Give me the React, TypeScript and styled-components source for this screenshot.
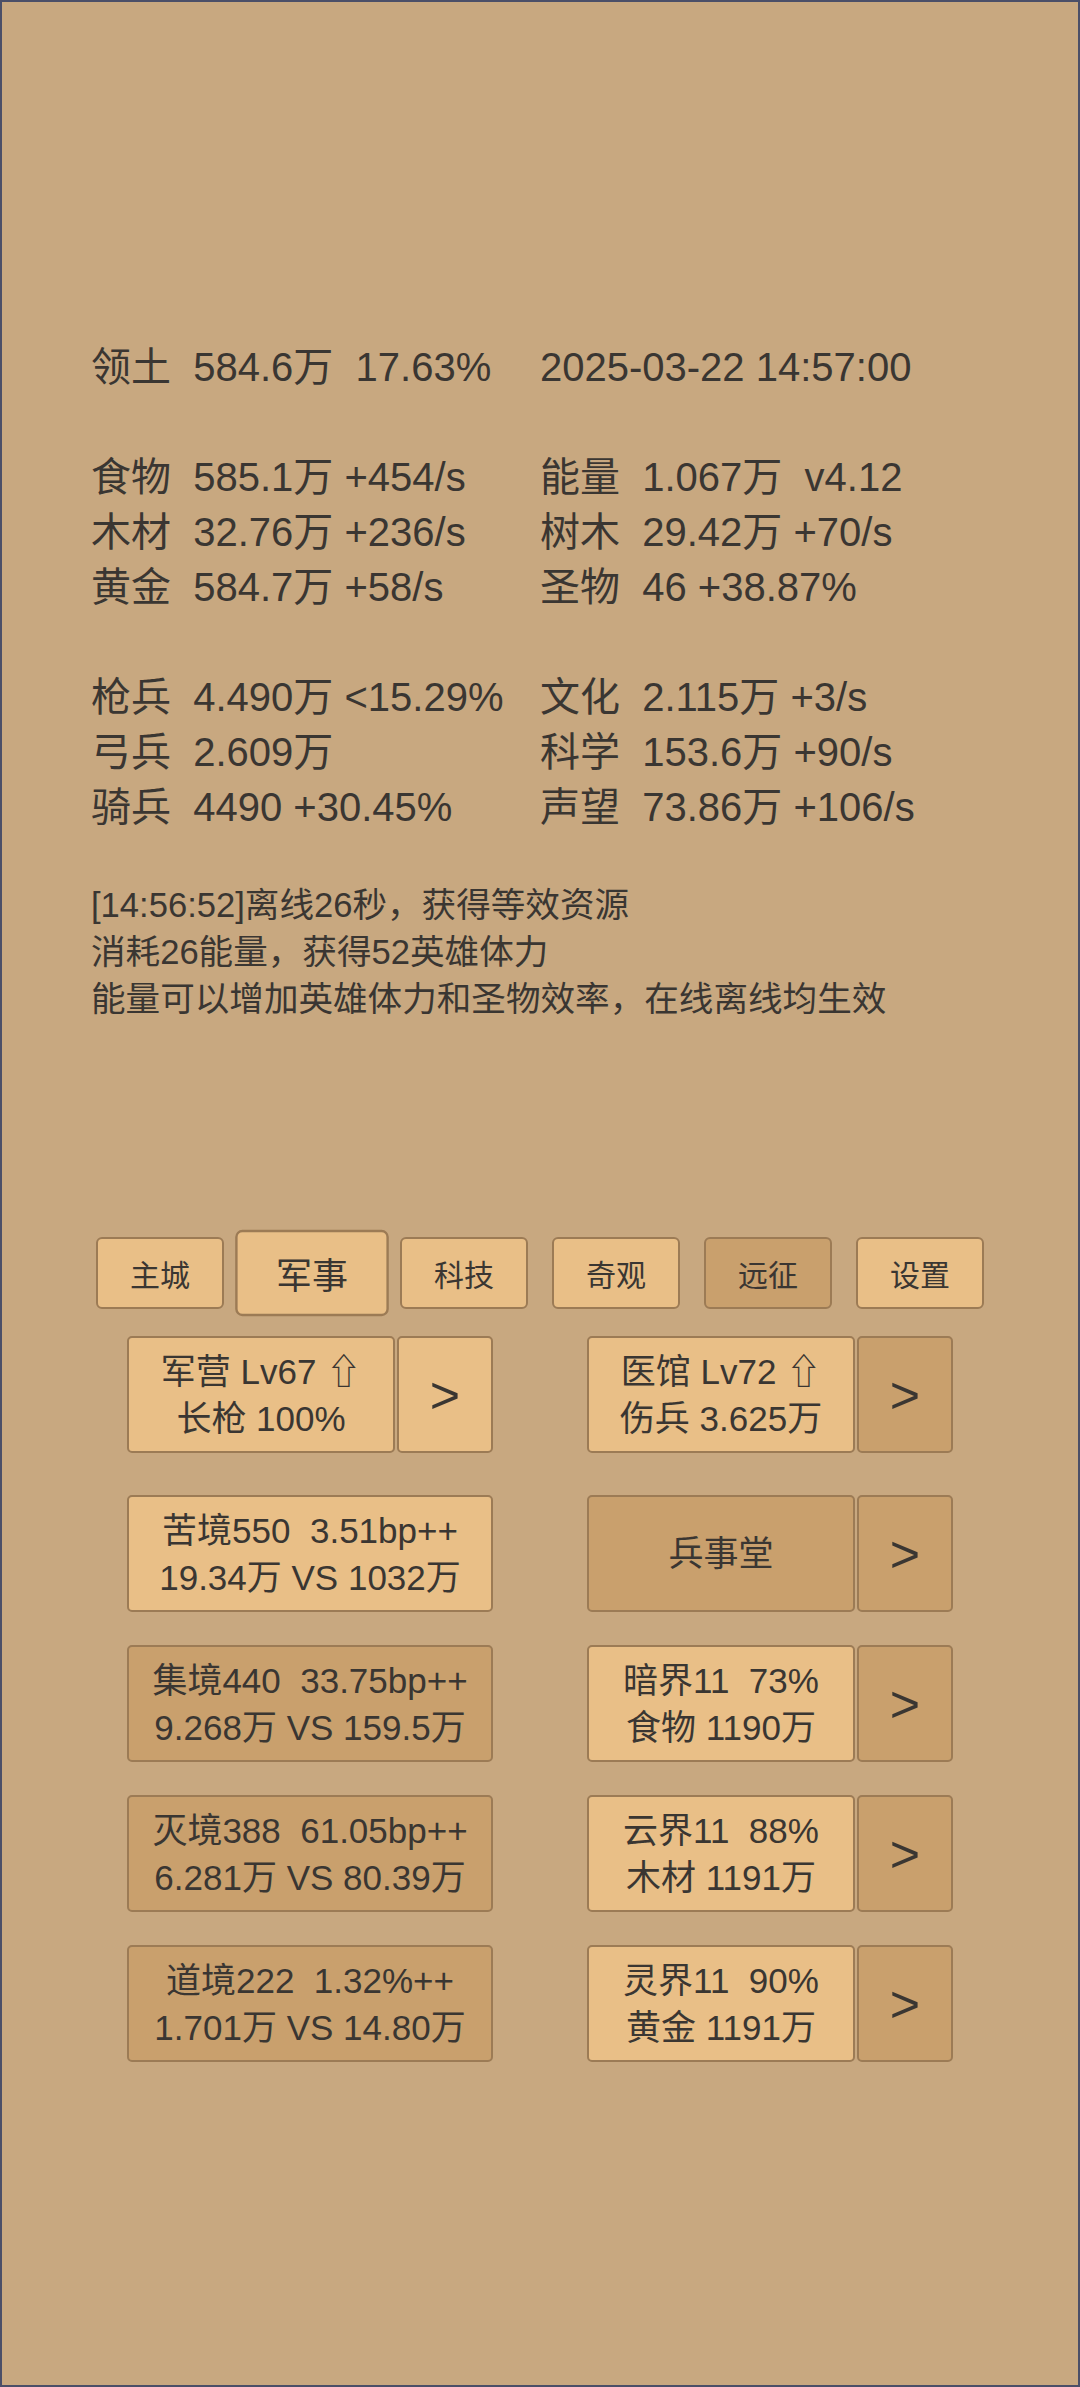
import * as React from 'react';
import styled, { createGlobalStyle } from 'styled-components';

const GlobalStyle = createGlobalStyle`
  html, body {
    margin: 0;
    padding: 0;
    background: #c8a880;
  }
`;

const Screen = styled.div`
  box-sizing: border-box;
  width: 1080px;
  height: 2387px;
  border: 2px solid #4b4f68;
  background: #c8a880;
  color: #3a3632;
  font-family: "Liberation Sans", "Noto Sans CJK SC", "DejaVu Sans", sans-serif;
  padding-top: 338px;
  overflow: hidden;
`;

const Stats = styled.div`
  display: grid;
  grid-template-columns: 449px 1fr;
  padding-left: 89px;
  font-size: 40px;
  line-height: 55px;
`;

const StatLine = styled.div`
  white-space: pre;
  height: 55px;
`;

const Log = styled.div`
  margin-top: 47px;
  padding-left: 89px;
  font-size: 34.6px;
  line-height: 47px;
`;

const Tabs = styled.div`
  display: flex;
  justify-content: center;
  gap: 24px;
  margin-top: 214px;
`;

const Tab = styled.div<{ $active?: boolean; $dark?: boolean }>`
  box-sizing: border-box;
  width: 128px;
  height: 72px;
  display: flex;
  align-items: center;
  justify-content: center;
  font-size: 30px;
  border: 2px solid #9c7b55;
  border-radius: 6px;
  background: ${p => (p.$dark ? '#c9a06d' : '#e9bf87')};
  transform: ${p => (p.$active ? 'scale(1.2)' : 'none')};
`;

const Board = styled.div`
  margin-top: 27px;
  display: flex;
  flex-direction: column;
  align-items: center;
  gap: 33px;
`;

const Row = styled.div<{ $first?: boolean }>`
  display: grid;
  grid-template-columns: 366px 366px;
  column-gap: 94px;
  margin-bottom: ${p => (p.$first ? '9px' : '0')};
`;

const Group = styled.div`
  display: flex;
  gap: 2px;
`;

const Btn = styled.div<{ $dark?: boolean; $wide?: boolean }>`
  box-sizing: border-box;
  width: ${p => (p.$wide ? '366px' : '268px')};
  height: 117px;
  display: flex;
  flex-direction: column;
  align-items: center;
  justify-content: center;
  font-size: 35px;
  line-height: 47px;
  white-space: pre;
  border: 2px solid #9c7b55;
  border-radius: 5px;
  background: ${p => (p.$dark ? '#c9a06d' : '#e9bf87')};
`;

const Arrow = styled(Btn)`
  width: 96px;
  font-size: 52px;
  line-height: 1;
`;

const stats: [string, string][] = [
  ['领土  584.6万  17.63%', '2025-03-22 14:57:00'],
  ['', ''],
  ['食物  585.1万 +454/s', '能量  1.067万  v4.12'],
  ['木材  32.76万 +236/s', '树木  29.42万 +70/s'],
  ['黄金  584.7万 +58/s', '圣物  46 +38.87%'],
  ['', ''],
  ['枪兵  4.490万 <15.29%', '文化  2.115万 +3/s'],
  ['弓兵  2.609万', '科学  153.6万 +90/s'],
  ['骑兵  4490 +30.45%', '声望  73.86万 +106/s'],
];

const tabs = [
  { name: '主城' },
  { name: '军事', active: true },
  { name: '科技' },
  { name: '奇观' },
  { name: '远征', dark: true },
  { name: '设置' },
];

const realms = [
  { left: ['集境440  33.75bp++', '9.268万 VS 159.5万'], right: ['暗界11  73%', '食物 1190万'] },
  { left: ['灭境388  61.05bp++', '6.281万 VS 80.39万'], right: ['云界11  88%', '木材 1191万'] },
  { left: ['道境222  1.32%++', '1.701万 VS 14.80万'], right: ['灵界11  90%', '黄金 1191万'] },
];

export default function App() {
  return (
    <>
      <GlobalStyle />
      <Screen>
        <Stats>
          {stats.map(([l, r], i) => (
            <React.Fragment key={i}>
              <StatLine>{l}</StatLine>
              <StatLine>{r}</StatLine>
            </React.Fragment>
          ))}
        </Stats>

        <Log>
          <div>[14:56:52]离线26秒，获得等效资源</div>
          <div>消耗26能量，获得52英雄体力</div>
          <div>能量可以增加英雄体力和圣物效率，在线离线均生效</div>
        </Log>

        <Tabs>
          {tabs.map(t => (
            <Tab key={t.name} $active={t.active} $dark={t.dark}>
              {t.name}
            </Tab>
          ))}
        </Tabs>

        <Board>
          <Row $first>
            <Group>
              <Btn>
                <span>军营 Lv67 ⇧</span>
                <span>长枪 100%</span>
              </Btn>
              <Arrow>&gt;</Arrow>
            </Group>
            <Group>
              <Btn>
                <span>医馆 Lv72 ⇧</span>
                <span>伤兵 3.625万</span>
              </Btn>
              <Arrow $dark>&gt;</Arrow>
            </Group>
          </Row>

          <Row>
            <Group>
              <Btn $wide>
                <span>苦境550  3.51bp++</span>
                <span>19.34万 VS 1032万</span>
              </Btn>
            </Group>
            <Group>
              <Btn $dark>兵事堂</Btn>
              <Arrow $dark>&gt;</Arrow>
            </Group>
          </Row>

          {realms.map((r, i) => (
            <Row key={i}>
              <Group>
                <Btn $wide $dark>
                  <span>{r.left[0]}</span>
                  <span>{r.left[1]}</span>
                </Btn>
              </Group>
              <Group>
                <Btn>
                  <span>{r.right[0]}</span>
                  <span>{r.right[1]}</span>
                </Btn>
                <Arrow $dark>&gt;</Arrow>
              </Group>
            </Row>
          ))}
        </Board>
      </Screen>
    </>
  );
}
